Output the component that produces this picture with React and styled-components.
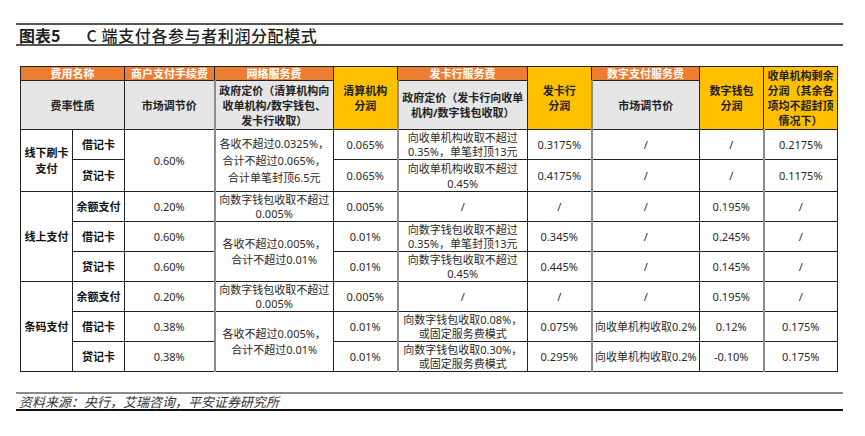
import React from 'react';
import styled, { createGlobalStyle } from 'styled-components';

const Global = createGlobalStyle`
  body {
    margin: 0;
    background: #fff;
    font-family: "Noto Sans", "Noto Sans CJK SC", sans-serif;
  }
`

const Page = styled.div`
  width: 827px;
  padding: 23px 0 0 16px;
`

const TitleBar = styled.div`
  display: flex;
  align-items: center;
  height: 19px;
  border-top: 2px solid #555;
  border-bottom: 2px solid #555;
  padding-left: 3px;
  font-size: 16px;
  font-weight: bold;
  color: #1e1e1e;
  font-family: "Noto Sans CJK SC", sans-serif;
`

const TitleText = styled.span`
  margin-left: ${p => p.$gap || 0}px;
  font-weight: ${p => p.$weight || 'bold'};
  letter-spacing: ${p => p.$ls || 0}px;
`

const Table = styled.table`
  margin: 20px 0 0 4px;
  border-collapse: collapse;
  table-layout: fixed;
  width: 817px;
  font-size: 11px;
  color: #2a2a2a;
`

const Row = styled.tr`
  height: ${p => p.$h}px;
`

const Cell = styled.td`
  border: 1px solid #222;
  ${p => p.$sep && 'border-left: 2px solid #8c8c8c;'}
  padding: 0 2px;
  text-align: center;
  vertical-align: middle;
  line-height: ${p => p.$lh || 14}px;
  font-weight: ${p => (p.$bold ? 'bold' : 'normal')};
  color: ${p => p.$color || 'inherit'};
  background: ${p => p.$bg || '#fff'};
  overflow: visible;
  white-space: nowrap;
`

const ORANGE = '#ED7D31'
const YELLOW = '#FFC000'
const GRAY = '#E7E6E6'

const widths = [52, 52, 90, 119, 64, 130, 64, 108, 64, 74]

const lines = (arr) => arr.map((l, i) => (
  <React.Fragment key={i}>
    {i > 0 && <br />}
    {l}
  </React.Fragment>
))

const Head = ({ children, ...rest }) => (
  <Cell $bg={ORANGE} $color="#fff" $bold $lh={12} {...rest}>{children}</Cell>
)

const Yellow = ({ text }) => (
  <Cell rowSpan={2} $bg={YELLOW} $color="#222" $bold $lh={15}>{lines(text)}</Cell>
)

const Sub = ({ text, ...rest }) => (
  <Cell $bg={GRAY} $color="#222" $bold $lh={15} {...rest}>{lines(text)}</Cell>
)

// body rows, cell: [text, {rs, sep, bold, lh}]
const body = [
  {
    h: 30,
    cells: [
      ['线下刷卡|支付', { rs: 2, bold: true, lh: 16 }],
      ['借记卡', { bold: true }],
      ['0.60%', { rs: 2 }],
      ['各收不超过0.0325%，|合计不超过0.065%，|合计单笔封顶6.5元', { rs: 2, sep: true, lh: 17 }],
      ['0.065%'],
      ['向收单机构收取不超过|0.35%，单笔封顶13元', { sep: true }],
      ['0.3175%'],
      ['/', { sep: true }],
      ['/'],
      ['0.2175%', { sep: true }],
    ],
  },
  {
    h: 32,
    cells: [
      ['贷记卡', { bold: true }],
      ['0.065%'],
      ['向收单机构收取不超过|0.45%', { sep: true, lh: 15 }],
      ['0.4175%'],
      ['/', { sep: true }],
      ['/'],
      ['0.1175%', { sep: true }],
    ],
  },
  {
    h: 30,
    cells: [
      ['线上支付', { rs: 3, bold: true }],
      ['余额支付', { bold: true }],
      ['0.20%'],
      ['向数字钱包收取不超过|0.005%', { sep: true }],
      ['0.005%'],
      ['/', { sep: true }],
      ['/'],
      ['/', { sep: true }],
      ['0.195%'],
      ['/', { sep: true }],
    ],
  },
  {
    h: 30,
    cells: [
      ['借记卡', { bold: true }],
      ['0.60%'],
      ['各收不超过0.005%，|合计不超过0.01%', { rs: 2, sep: true, lh: 16 }],
      ['0.01%'],
      ['向数字钱包收取不超过|0.35%，单笔封顶13元', { sep: true }],
      ['0.345%'],
      ['/', { sep: true }],
      ['0.245%'],
      ['/', { sep: true }],
    ],
  },
  {
    h: 30,
    cells: [
      ['贷记卡', { bold: true }],
      ['0.60%'],
      ['0.01%'],
      ['向数字钱包收取不超过|0.45%', { sep: true }],
      ['0.445%'],
      ['/', { sep: true }],
      ['0.145%'],
      ['/', { sep: true }],
    ],
  },
  {
    h: 30,
    cells: [
      ['条码支付', { rs: 3, bold: true }],
      ['余额支付', { bold: true }],
      ['0.20%'],
      ['向数字钱包收取不超过|0.005%', { sep: true }],
      ['0.005%'],
      ['/', { sep: true }],
      ['/'],
      ['/', { sep: true }],
      ['0.195%'],
      ['/', { sep: true }],
    ],
  },
  {
    h: 30,
    cells: [
      ['借记卡', { bold: true }],
      ['0.38%'],
      ['各收不超过0.005%，|合计不超过0.01%', { rs: 2, sep: true, lh: 16 }],
      ['0.01%'],
      ['向数字钱包收取0.08%，|或固定服务费模式', { sep: true }],
      ['0.075%'],
      ['向收单机构收取0.2%', { sep: true }],
      ['0.12%'],
      ['0.175%', { sep: true }],
    ],
  },
  {
    h: 30,
    cells: [
      ['贷记卡', { bold: true }],
      ['0.38%'],
      ['0.01%'],
      ['向数字钱包收取0.30%，|或固定服务费模式', { sep: true }],
      ['0.295%'],
      ['向收单机构收取0.2%', { sep: true }],
      ['-0.10%'],
      ['0.175%', { sep: true }],
    ],
  },
]

const Footer = styled.div`
  margin-top: 20px;
  height: 15px;
  display: flex;
  align-items: center;
  padding-left: 3px;
  border-top: 2px solid #8a8a8a;
  border-bottom: 2px solid #111;
  font-size: 13px;
  font-style: italic;
  color: #333;
  font-family: "Noto Sans CJK SC", sans-serif;
`

const App = () => (
  <Page>
    <Global />
    <TitleBar>
      <TitleText>图表5</TitleText>
      <TitleText $gap={26} $weight={500} $ls={0.6}>C 端支付各参与者利润分配模式</TitleText>
    </TitleBar>

    <Table>
      <colgroup>
        {widths.map((w, i) => <col key={i} style={{ width: w }} />)}
      </colgroup>
      <tbody>
        <Row $h={14}>
          <Head colSpan={2}>费用名称</Head>
          <Head>商户支付手续费</Head>
          <Head>网络服务费</Head>
          <Yellow text={['清算机构', '分润']} />
          <Head>发卡行服务费</Head>
          <Yellow text={['发卡行', '分润']} />
          <Head>数字支付服务费</Head>
          <Yellow text={['数字钱包', '分润']} />
          <Yellow text={['收单机构剩余', '分润（其余各', '项均不超封顶', '情况下）']} />
        </Row>
        <Row $h={49}>
          <Sub colSpan={2} text={['费率性质']} />
          <Sub text={['市场调节价']} />
          <Sub $sep text={['政府定价（清算机构向', '收单机构/数字钱包、', '发卡行收取）']} />
          <Sub $sep text={['政府定价（发卡行向收单', '机构/数字钱包收取）']} />
          <Sub $sep text={['市场调节价']} />
        </Row>
        {body.map((r, ri) => (
          <Row key={ri} $h={r.h}>
            {r.cells.map(([t, o = {}], ci) => (
              <Cell
                key={ci}
                rowSpan={o.rs}
                $sep={o.sep}
                $bold={o.bold}
                $color={o.bold ? '#111' : undefined}
                $lh={o.lh}
              >
                {lines(t.split('|'))}
              </Cell>
            ))}
          </Row>
        ))}
      </tbody>
    </Table>

    <Footer>资料来源：央行，艾瑞咨询，平安证券研究所</Footer>
  </Page>
)

export default App
